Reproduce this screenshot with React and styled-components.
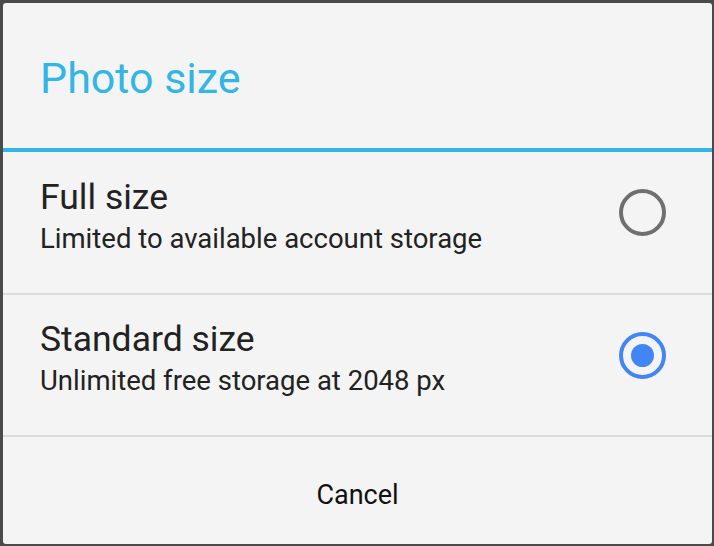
import React, { useState } from 'react';
import styled, { createGlobalStyle } from 'styled-components';

const GlobalStyle = createGlobalStyle`
  html, body {
    margin: 0;
    padding: 0;
    background: #4a4a4a;
  }
  body {
    font-family: Roboto, "Noto Sans", sans-serif;
  }
`;

const Screen = styled.div`
  width: 714px;
  height: 546px;
  box-sizing: border-box;
  padding: 3px 2px 2px 3px;
  display: flex;
`;

const Dialog = styled.div`
  flex: 1;
  display: flex;
  flex-direction: column;
  background: #f4f4f4;
  border-radius: 3px;
  overflow: hidden;
`;

const Header = styled.div`
  height: 149px;
  flex-shrink: 0;
  display: flex;
  align-items: center;
  padding-left: 37px;
  border-bottom: 4px solid #33b5e5;
  box-sizing: border-box;
`;

const Title = styled.h1`
  margin: 4px 0 0;
  font-weight: 400;
  font-size: 43px;
  color: #33b5e5;
`;

const Option = styled.label`
  height: ${(p) => p.$height}px;
  flex-shrink: 0;
  box-sizing: border-box;
  display: flex;
  align-items: center;
  justify-content: space-between;
  padding: 0 46px 14px 37px;
  border-bottom: 2px solid #dcdcdc;
  cursor: pointer;
`;

const OptionText = styled.div`
  display: flex;
  flex-direction: column;
  gap: 6px;
`;

const OptionTitle = styled.span`
  font-size: 35.5px;
  line-height: 40px;
  color: #222;
`;

const OptionDesc = styled.span`
  font-size: 27.5px;
  line-height: 32px;
  color: #222;
`;

const Radio = styled.span`
  width: 47px;
  height: 47px;
  margin-bottom: 6px;
  box-sizing: border-box;
  border-radius: 50%;
  border: 4px solid ${(p) => (p.$checked ? '#4285f4' : '#6f6f6f')};
  display: flex;
  align-items: center;
  justify-content: center;

  &::after {
    content: '';
    width: 23px;
    height: 23px;
    border-radius: 50%;
    background: #4285f4;
    display: ${(p) => (p.$checked ? 'block' : 'none')};
  }
`;

const Footer = styled.button`
  flex: 1;
  border: none;
  background: transparent;
  font-family: inherit;
  font-size: 27px;
  color: #111;
  display: flex;
  align-items: center;
  justify-content: center;
  padding: 8px 0 0;
  cursor: pointer;
`;

const options = [
  { id: 'full', title: 'Full size', desc: 'Limited to available account storage', height: 143 },
  { id: 'standard', title: 'Standard size', desc: 'Unlimited free storage at 2048 px', height: 142 },
];

export default function App() {
  const [selected, setSelected] = useState('standard');
  return (
    <>
      <GlobalStyle />
      <Screen>
        <Dialog>
          <Header>
            <Title>Photo size</Title>
          </Header>
          {options.map((o) => (
            <Option key={o.id} $height={o.height} onClick={() => setSelected(o.id)}>
              <OptionText>
                <OptionTitle>{o.title}</OptionTitle>
                <OptionDesc>{o.desc}</OptionDesc>
              </OptionText>
              <Radio $checked={selected === o.id} />
            </Option>
          ))}
          <Footer>Cancel</Footer>
        </Dialog>
      </Screen>
    </>
  );
}
